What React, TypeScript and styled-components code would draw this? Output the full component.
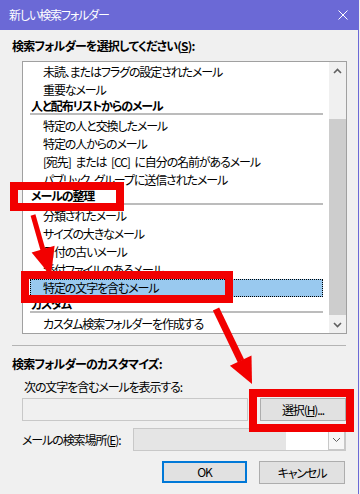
import React from "react";
import styled, { createGlobalStyle } from "styled-components";

const FONT = `"Noto Sans CJK JP", "Noto Sans", sans-serif`;
const PURPLE = "#6b69d6";
const RED = "#f20000";

const GlobalStyle = createGlobalStyle`
  html, body {
    margin: 0;
    padding: 0;
    background: #f0f0f0;
  }
  body {
    font-family: ${FONT};
    font-feature-settings: "palt";
  }
`;

type Row =
  | { kind: "item"; text: string; selected?: boolean }
  | { kind: "header"; text: string };

const rows: Row[] = [
  { kind: "item", text: "未読、またはフラグの設定されたメール" },
  { kind: "item", text: "重要なメール" },
  { kind: "header", text: "人と配布リストからのメール" },
  { kind: "item", text: "特定の人と交換したメール" },
  { kind: "item", text: "特定の人からのメール" },
  { kind: "item", text: "[宛先] または [CC] に自分の名前があるメール" },
  { kind: "item", text: "パブリック グループに送信されたメール" },
  { kind: "header", text: "メールの整理" },
  { kind: "item", text: "分類されたメール" },
  { kind: "item", text: "サイズの大きなメール" },
  { kind: "item", text: "日付の古いメール" },
  { kind: "item", text: "添付ファイルのあるメール" },
  { kind: "item", text: "特定の文字を含むメール", selected: true },
  { kind: "header", text: "カスタム" },
  { kind: "item", text: "カスタム検索フォルダーを作成する" },
];

export default function App() {
  return (
    <>
      <GlobalStyle />
      <Window>
        {/* タイトルバー */}
        <TitleBar>
          <TitleText>新しい検索フォルダー</TitleText>
          <svg width="10" height="10" viewBox="0 0 10 10">
            <path d="M0.5 0.5 L9.5 9.5 M9.5 0.5 L0.5 9.5" stroke="#fff" strokeWidth="1" />
          </svg>
        </TitleBar>

        <Body>
          <SectionLabel>
            検索フォルダーを選択してください(<u>S</u>):
          </SectionLabel>

          {/* リストボックス */}
          <ListBox>
            <List>
              {rows.map((r, i) =>
                r.kind === "header" ? (
                  <HeaderRow key={i}>
                    <HeaderText>{r.text}</HeaderText>
                    <HeaderRule />
                  </HeaderRow>
                ) : (
                  <ItemRow key={i} $selected={!!r.selected}>
                    {r.text}
                  </ItemRow>
                )
              )}
            </List>
            <ScrollBar>
              <ScrollArrow>
                <svg width="9" height="6" viewBox="0 0 9 6">
                  <path d="M1 5 L4.5 1.5 L8 5" fill="none" stroke="#606060" strokeWidth="1.6" />
                </svg>
              </ScrollArrow>
              <ScrollTrack>
                <Thumb />
              </ScrollTrack>
              <ScrollArrow>
                <svg width="9" height="6" viewBox="0 0 9 6">
                  <path d="M1 1 L4.5 4.5 L8 1" fill="none" stroke="#606060" strokeWidth="1.6" />
                </svg>
              </ScrollArrow>
            </ScrollBar>
          </ListBox>

          <Separator />

          <SectionLabel $gap={10}>検索フォルダーのカスタマイズ:</SectionLabel>
          <SubLabel>次の文字を含むメールを表示する:</SubLabel>

          <FieldRow>
            <TextBox />
            <Button>
              選択(<u>H</u>)...
            </Button>
          </FieldRow>

          <ComboRow>
            <span>
              メールの検索場所(<u>E</u>):
            </span>
            <Combo>
              <ComboFill />
              <ComboWhite />
              <ComboDrop>
                <svg width="9" height="6" viewBox="0 0 9 6">
                  <path d="M1 1 L4.5 4.5 L8 1" fill="none" stroke="#606060" strokeWidth="1" />
                </svg>
              </ComboDrop>
            </Combo>
          </ComboRow>

          <ButtonRow>
            <Button $default>OK</Button>
            <Button>キャンセル</Button>
          </ButtonRow>
        </Body>

        {/* 注釈（赤枠と矢印） */}
        <Annotations width="360" height="494" viewBox="0 0 360 494">
          <rect x="14" y="186" width="106" height="21" fill="none" stroke={RED} strokeWidth="8" />
          <rect x="25" y="275" width="204" height="24" fill="none" stroke={RED} strokeWidth="8" />
          <rect x="253" y="393" width="97" height="35" fill="none" stroke={RED} strokeWidth="8" />
          <line x1="33" y1="215" x2="43" y2="250" stroke={RED} strokeWidth="5" />
          <polygon points="54.6,245.7 31.6,252.5 51,276" fill={RED} />
          <line x1="216" y1="309" x2="241" y2="361" stroke={RED} strokeWidth="7" />
          <polygon points="251.5,355.4 229.9,365.8 252,384" fill={RED} />
        </Annotations>
      </Window>
    </>
  );
}

const Window = styled.div`
  position: relative;
  width: 359px;
  height: 494px;
  background: #f0f0f0;
  border-right: 1px solid ${PURPLE};
  box-sizing: border-box;
  overflow: hidden;
  font-family: ${FONT};
  font-size: 12px;
  letter-spacing: -1.1px;
  word-spacing: 3px;
  color: #000;
`;

const TitleBar = styled.div`
  height: 30px;
  background: ${PURPLE};
  display: flex;
  align-items: center;
  justify-content: space-between;
  padding: 0 11px 0 9px;
  margin-right: -1px;
  box-sizing: border-box;
`;

const TitleText = styled.div`
  color: #fff;
  font-size: 12px;
  line-height: 16px;
`;

const Body = styled.div`
  display: flex;
  flex-direction: column;
  padding-left: 12px;
`;

const SectionLabel = styled.div<{ $gap?: number }>`
  margin-top: ${({ $gap }) => $gap ?? 8}px;
  font-weight: bold;
  line-height: 16px;
  letter-spacing: -0.8px;
`;

const ListBox = styled.div`
  margin: 7px 0 0 10px;
  width: 325px;
  height: 273px;
  box-sizing: border-box;
  border: 1px solid #a0a0a0;
  background: #fff;
  display: flex;
`;

const List = styled.div`
  flex: 1;
  padding-top: 1px;
  overflow: hidden;
`;

const ItemRow = styled.div<{ $selected: boolean }>`
  height: 18px;
  line-height: 18px;
  margin: 0 6px 0 7px;
  padding-left: 13px;
  box-sizing: border-box;
  white-space: nowrap;
  background: ${({ $selected }) => ($selected ? "#99c9ef" : "transparent")};
  outline: ${({ $selected }) => ($selected ? "1px dotted #000" : "none")};
  outline-offset: -1px;
`;

const HeaderRow = styled.div`
  height: 18px;
  display: flex;
  flex-direction: column;
  padding-left: 8px;
`;

const HeaderText = styled.div`
  font-weight: bold;
  line-height: 14px;
  height: 14px;
  white-space: nowrap;
`;

const HeaderRule = styled.div`
  height: 2px;
  margin: 0 6px 0 -1px;
  background: #bcbcbc;
`;

const ScrollBar = styled.div`
  width: 17px;
  display: flex;
  flex-direction: column;
  background: #f0f0f0;
`;

const ScrollArrow = styled.div`
  height: 17px;
  display: flex;
  align-items: center;
  justify-content: center;
`;

const ScrollTrack = styled.div`
  flex: 1;
  display: flex;
  flex-direction: column;
  padding-top: 40px;
`;

const Thumb = styled.div`
  height: 196px;
  background: #cdcdcd;
`;

const Separator = styled.div`
  margin-top: 11px;
  width: 334px;
  height: 1px;
  background: #b4b4b4;
`;

const SubLabel = styled.div`
  margin: 7px 0 0 12px;
  line-height: 16px;
`;

const FieldRow = styled.div`
  margin: 3px 0 0 10px;
  width: 324px;
  display: flex;
  align-items: flex-start;
  gap: 12px;
`;

const TextBox = styled.div`
  width: 226px;
  height: 23px;
  box-sizing: border-box;
  border: 1px solid #c8c8c8;
  background: #f0f0f0;
`;

const Button = styled.div<{ $default?: boolean }>`
  width: 86px;
  height: ${({ $default }) => ($default ? 22 : 23)}px;
  box-sizing: border-box;
  border: ${({ $default }) => ($default ? "2px solid #0078d7" : "1px solid #adadad")};
  background: #e1e1e1;
  display: flex;
  align-items: center;
  justify-content: center;
  line-height: 16px;
`;

const ComboRow = styled.div`
  margin: 7px 0 0 10px;
  width: 324px;
  display: flex;
  align-items: center;
  justify-content: space-between;
`;

const Combo = styled.div`
  width: 213px;
  height: 23px;
  box-sizing: border-box;
  border: 1px solid #c8c8c8;
  display: flex;
`;

const ComboFill = styled.div`
  width: 152px;
  background: #e5e5e5;
`;

const ComboWhite = styled.div`
  flex: 1;
  background: #fff;
`;

const ComboDrop = styled.div`
  width: 17px;
  box-sizing: border-box;
  border: 1px solid #c8c8c8;
  background: #f7f7f7;
  display: flex;
  align-items: center;
  justify-content: center;
`;

const ButtonRow = styled.div`
  margin: 10px 0 0 150px;
  display: flex;
  gap: 12px;
  & > div:first-child {
    width: 85px;
  }
`;

const Annotations = styled.svg`
  position: absolute;
  left: 0;
  top: 0;
  pointer-events: none;
`;
